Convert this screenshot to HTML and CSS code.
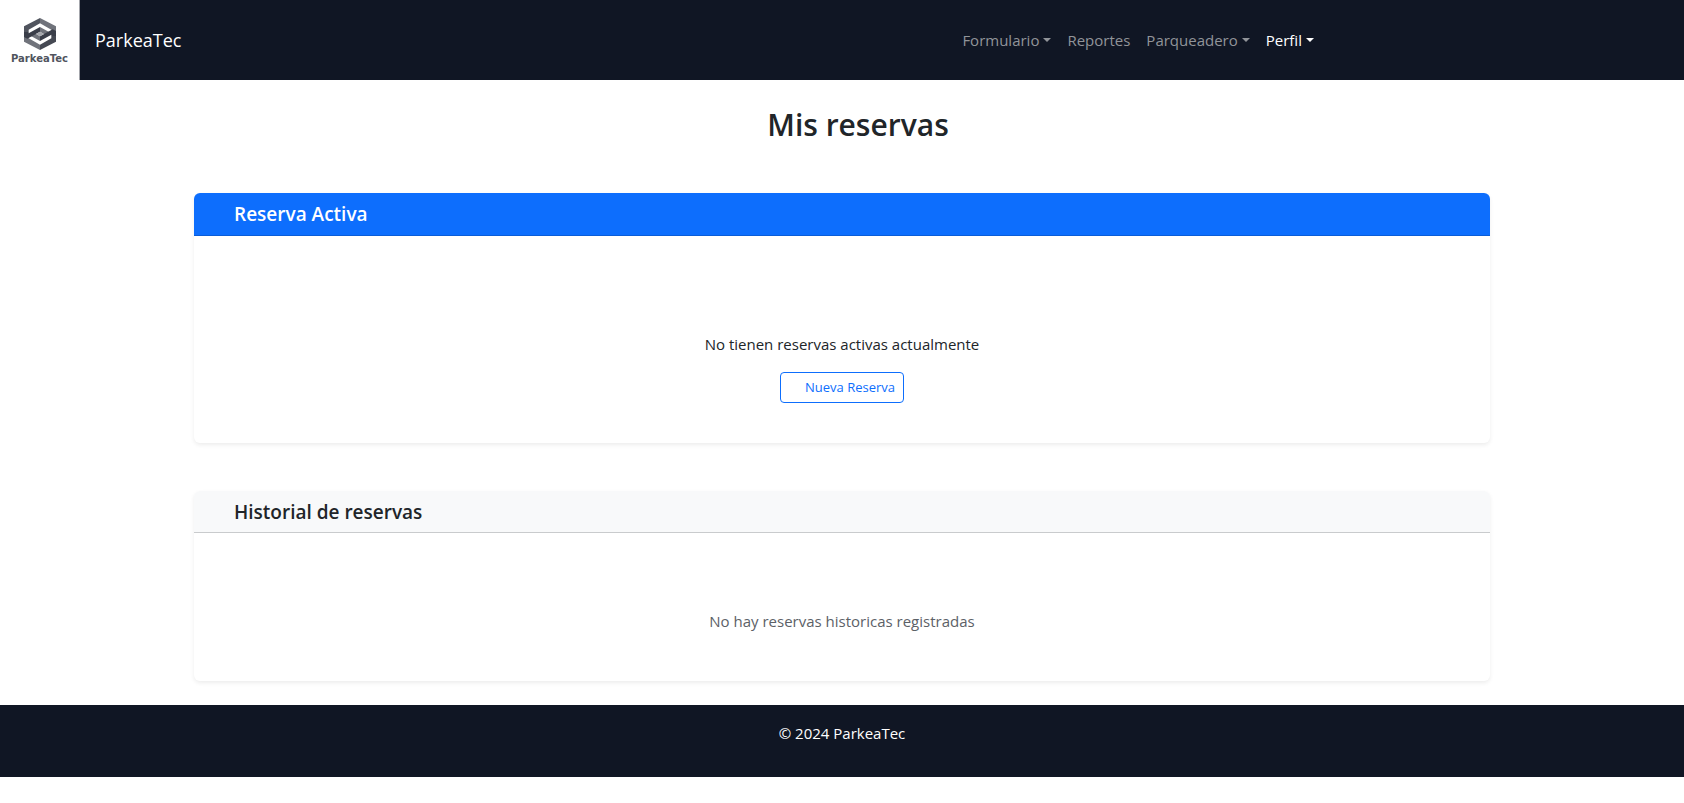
FILE: index.html
```html
<!DOCTYPE html>
<html lang="es">
<head>
<meta charset="utf-8">
<title>ParkeaTec</title>
<link rel="stylesheet" href="styles.css">
</head>
<body>
<header class="navbar">
  <a class="brand" href="#">
    <span class="logo">
      <svg class="logo-mark" viewBox="0 0 96 96" aria-hidden="true">
        <path d="M0 25 48 0v16L14 35v7L0 42z" fill="#50545e"/>
        <path d="M48 0 96 25v16l-10 5-4-3v-8L48 16z" fill="#70737b"/>
        <path d="M96 71 48 96V80l34-19v-7l14 0z" fill="#454953"/>
        <path d="M48 96 0 71V55l10-5 4 3v8l34 19z" fill="#70737b"/>
        <path d="M48 27 82 46 68 53 48 41z" fill="#70737b"/>
        <path d="M48 69 14 50l14-7 20 12z" fill="#70737b"/>
        <path d="M0 42 14 42V46L48 27v14L10 62 0 57z" fill="#3a3e49"/>
        <path d="M96 54H82v-4L48 69V55l38-21 10 5z" fill="#3a3e49"/>
        <path d="m48 41 12 7-12 7-12-7z" fill="#a5a7ac"/>
      </svg>
      <span class="logo-name">ParkeaTec</span>
    </span>
    <span class="brand-name">ParkeaTec</span>
  </a>
  <nav class="menu">
    <button class="menu-item dropdown" type="button">Formulario</button>
    <a class="menu-item" href="#">Reportes</a>
    <button class="menu-item dropdown" type="button">Parqueadero</button>
    <button class="menu-item dropdown active" type="button">Perfil</button>
  </nav>
</header>
<main class="container">
  <h1 class="title">Mis reservas</h1>
  <section class="card">
    <h2 class="card-header primary">Reserva Activa</h2>
    <div class="card-body tall">
      <p class="message">No tienen reservas activas actualmente</p>
      <button class="btn" type="button">Nueva Reserva</button>
    </div>
  </section>
  <section class="card">
    <h2 class="card-header light">Historial de reservas</h2>
    <div class="card-body">
      <p class="message muted">No hay reservas historicas registradas</p>
    </div>
  </section>
</main>
<footer class="footer">© 2024 ParkeaTec</footer>
</body>
</html>
```
FILE: styles.css
```css
* { box-sizing: border-box; }

body {
  margin: 0;
  background: #fff;
  color: #212529;
  font-family: "Open Sans", "Noto Sans", sans-serif;
  font-size: 15px;
  line-height: 24px;
}

h1, h2, p { margin: 0; }

.navbar {
  display: flex;
  align-items: center;
  justify-content: space-between;
  background: #101624;
}

.brand {
  display: flex;
  align-items: center;
  gap: 15px;
  color: #fff;
  font-size: 18px;
  text-decoration: none;
}

.logo {
  display: flex;
  flex-direction: column;
  align-items: center;
  gap: 3px;
  width: 80px;
  height: 80px;
  padding-top: 18px;
  border-right: 1px solid #a3a5ab;
  background: #fff;
}

.logo-mark { width: 32px; height: 32px; }

.logo-name {
  color: #50545e;
  font-family: "DejaVu Sans", sans-serif;
  font-size: 10px;
  font-weight: 700;
  line-height: 12px;
}

.menu {
  display: flex;
  margin-right: 21.5%;
}

.menu-item {
  display: flex;
  align-items: center;
  gap: 4px;
  padding: 8px;
  border: 0;
  background: none;
  color: #919499;
  font: inherit;
  text-decoration: none;
  cursor: pointer;
}

.dropdown::after {
  content: "";
  border: 4px solid transparent;
  border-top-color: currentColor;
  border-bottom: 0;
}

.active { color: #fff; }

.container {
  max-width: 1320px;
  margin: 0 auto;
  padding: 24px 12px;
}

.title {
  padding: 1px 0 1px 32px;
  margin-bottom: 48px;
  font-size: 30px;
  font-weight: 600;
  line-height: 39px;
  text-align: center;
}

.card {
  border-radius: 6px;
  background: #fff;
  box-shadow: 0 2px 4px rgba(0, 0, 0, .075);
}

.card + .card { margin-top: 48px; }

.card-header {
  padding: 9px 40px 8px;
  border-bottom: 1px solid #c9cbcd;
  border-radius: 6px 6px 0 0;
  font-size: 19px;
  font-weight: 600;
  line-height: 24px;
}

.primary {
  padding-bottom: 9px;
  border-bottom-color: #0b5dd7;
  background: #0d6efd;
  color: #fff;
}

.light { background: #f8f9fa; }

.card-body {
  display: flex;
  flex-direction: column;
  align-items: center;
  gap: 16px;
  padding: 76px 16px 48px;
}

.tall { padding: 96px 16px 40px; }

.muted { color: #5c6167; }

.btn {
  padding: 4px 8px 4px 24px;
  border: 1px solid #0d6efd;
  border-radius: 4px;
  background: none;
  color: #0d6efd;
  font: inherit;
  font-size: 13px;
  line-height: 21px;
}

.footer {
  padding: 16px 16px 32px;
  background: #101624;
  color: #fff;
  text-align: center;
}
```
